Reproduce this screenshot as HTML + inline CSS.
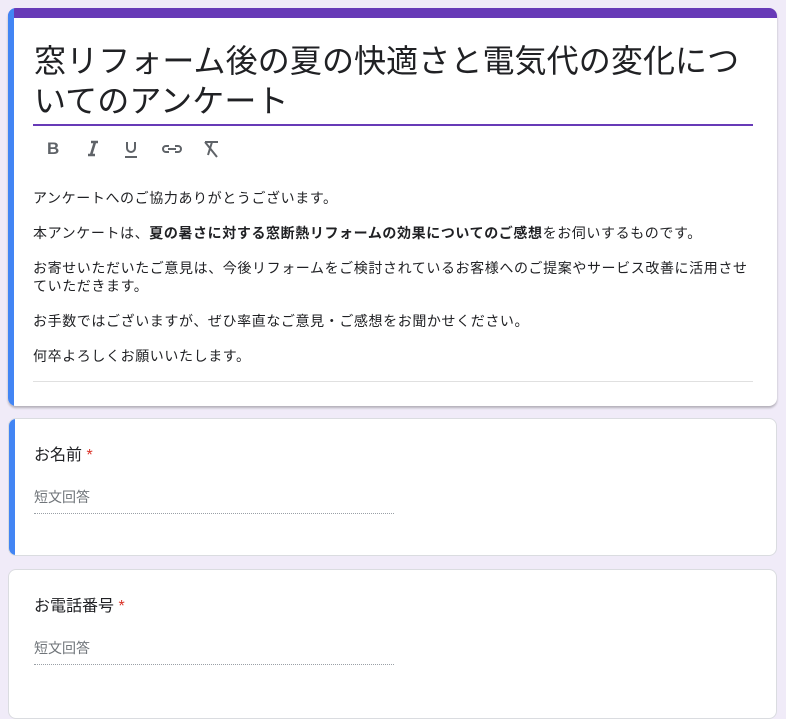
<!DOCTYPE html>
<html><head><meta charset="utf-8"><style>
body{margin:0;background:#f0ebf8;font-family:"Liberation Sans","Noto Sans CJK JP",sans-serif;color:#202124;width:786px;height:701px;overflow:hidden;position:relative}
.card{position:absolute;left:8px;width:769px;background:#fff;border-radius:8px;border:1px solid #dadce0;box-sizing:border-box;overflow:hidden}
.c1{top:8px;height:398px;box-shadow:0 2px 2px rgba(0,0,0,.25);border:none}
.top{position:absolute;left:0;top:0;right:0;height:10px;background:#673ab7}
.bar{position:absolute;left:0;top:0;bottom:0;width:6px;background:#4285f4}
.title{position:absolute;left:26px;top:33px;font-size:32px;line-height:40px;width:712px;letter-spacing:0.1px}
.ul{position:absolute;left:25px;top:116px;width:720px;height:2px;background:#673ab7}
.tb{position:absolute;top:129px;left:25px;height:24px}
.desc{position:absolute;left:25px;top:181px;font-size:14px;line-height:18px;width:724px;letter-spacing:0.6px}
.desc p{margin:0 0 17px}
.hr{position:absolute;left:25px;top:373px;width:720px;height:1px;background:#e0e0e0}
.q{font-size:16px;position:absolute;left:25px;top:22px}
.q span{color:#d93025}
.in{position:absolute;left:25px;top:68px;font-size:14px;color:#70757a;width:360px;height:26px;border-bottom:1px dotted #9aa0a6}
</style></head><body>
<div class="card c1"><div class="top"></div><div class="bar"></div>
<div class="title">窓リフォーム後の夏の快適さと電気代の変化についてのアンケート</div>
<div class="ul"></div>
<svg class="tb" width="200" height="24" viewBox="0 0 200 24" fill="none" stroke="#5f6368" stroke-width="2.2">
<text x="14" y="17" font-family="Liberation Sans" font-weight="bold" font-size="17" fill="#5f6368" stroke="none">B</text>
<path d="M58 5h7M55 18h7M62 5l-4 13" stroke-width="2.6"/>
<path d="M94 5v6a4 4 0 0 0 8 0V5M92 20h12" stroke-width="2"/>
<path d="M136 9h-3a3 3 0 0 0 0 6h3M142 9h3a3 3 0 0 1 0 6h-3M135 12h8" stroke-width="2"/>
<path d="M172 5h13M179 5l-4 13M172 5l12 15" stroke-width="2"/>
</svg>
<div class="desc">
<p>アンケートへのご協力ありがとうございます。</p>
<p>本アンケートは、<b>夏の暑さに対する窓断熱リフォームの効果についてのご感想</b>をお伺いするものです。</p>
<p>お寄せいただいたご意見は、今後リフォームをご検討されているお客様へのご提案やサービス改善に活用させていただきます。</p>
<p>お手数ではございますが、ぜひ率直なご意見・ご感想をお聞かせください。</p>
<p>何卒よろしくお願いいたします。</p>
</div>
<div class="hr"></div>
</div>
<div class="card" style="top:418px;height:138px"><div class="bar"></div>
<div class="q">お名前 <span>*</span></div><div class="in">短文回答</div></div>
<div class="card" style="top:569px;height:150px">
<div class="q">お電話番号 <span>*</span></div><div class="in">短文回答</div></div>
</body></html>
